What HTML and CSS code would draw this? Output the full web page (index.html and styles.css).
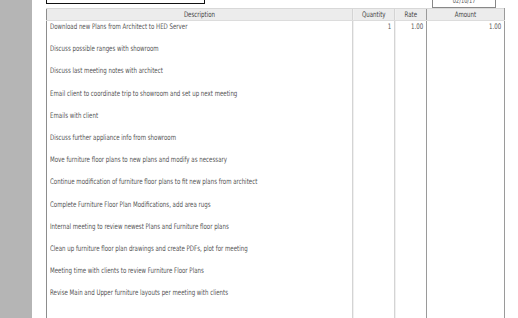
FILE: index.html
```html
<!DOCTYPE html>
<html>
<head>
<meta charset="utf-8">
<link rel="stylesheet" href="styles.css">
</head>
<body>
<div class="sidebar"></div>
<div class="page">
  <div class="topbar">
    <div class="namebox"></div>
    <div class="datebox"><span class="t">02/10/17</span></div>
  </div>
  <table class="items">
    <colgroup>
      <col class="c-desc"><col class="c-qty"><col class="c-rate"><col class="c-amt">
    </colgroup>
    <thead>
      <tr><th><span class="t">Description</span></th><th class="light"><span class="t">Quantity</span></th><th class="light"><span class="t">Rate</span></th><th class="dark"><span class="t">Amount</span></th></tr>
    </thead>
    <tbody>
      <tr><td><span class="t">Download new Plans from Architect to HED Server</span></td><td class="num light"><span class="t">1</span></td><td class="num light"><span class="t">1.00</span></td><td class="num dark"><span class="t">1.00</span></td></tr>
      <tr><td><span class="t">Discuss possible ranges with showroom</span></td><td class="light"></td><td class="light"></td><td class="dark"></td></tr>
      <tr><td><span class="t">Discuss last meeting notes with architect</span></td><td class="light"></td><td class="light"></td><td class="dark"></td></tr>
      <tr><td><span class="t">Email client to coordinate trip to showroom and set up next meeting</span></td><td class="light"></td><td class="light"></td><td class="dark"></td></tr>
      <tr><td><span class="t">Emails with client</span></td><td class="light"></td><td class="light"></td><td class="dark"></td></tr>
      <tr><td><span class="t">Discuss further appliance info from showroom</span></td><td class="light"></td><td class="light"></td><td class="dark"></td></tr>
      <tr><td><span class="t">Move furniture floor plans to new plans and modify as necessary</span></td><td class="light"></td><td class="light"></td><td class="dark"></td></tr>
      <tr><td><span class="t">Continue modification of furniture floor plans to fit new plans from architect</span></td><td class="light"></td><td class="light"></td><td class="dark"></td></tr>
      <tr><td><span class="t">Complete Furniture Floor Plan Modifications, add area rugs</span></td><td class="light"></td><td class="light"></td><td class="dark"></td></tr>
      <tr><td><span class="t">Internal meeting to review newest Plans and Furniture floor plans</span></td><td class="light"></td><td class="light"></td><td class="dark"></td></tr>
      <tr><td><span class="t">Clean up furniture floor plan drawings and create PDFs, plot for meeting</span></td><td class="light"></td><td class="light"></td><td class="dark"></td></tr>
      <tr><td><span class="t">Meeting time with clients to review Furniture Floor Plans</span></td><td class="light"></td><td class="light"></td><td class="dark"></td></tr>
      <tr><td><span class="t">Revise Main and Upper furniture layouts per meeting with clients</span></td><td class="light"></td><td class="light"></td><td class="dark"></td></tr>
      <tr class="tail"><td></td><td class="light"></td><td class="light"></td><td class="dark"></td></tr>
    </tbody>
  </table>
</div>
</body>
</html>
```
FILE: styles.css
```css
html, body {
  margin: 0;
  padding: 0;
  height: 318px;
  overflow: hidden;
  background: #ffffff;
}
body {
  display: flex;
  font-family: "DejaVu Sans Condensed", "Liberation Sans Narrow", "Liberation Sans", sans-serif;
  font-stretch: condensed;
  color: #555555;
}
.sidebar {
  width: 32px;
  flex: none;
  background: #b5b5b5;
}
.page {
  flex: 1;
  padding-left: 14px;
  background: #ffffff;
}
.t {
  display: inline-block;
  transform: scaleX(0.8);
  transform-origin: left center;
  white-space: nowrap;
}
.topbar {
  display: flex;
  justify-content: space-between;
  align-items: flex-start;
  height: 8px;
  width: 450px;
}
.namebox {
  width: 157px;
  height: 12px;
  margin-top: -10px;
  border: 1px solid #111;
  border-bottom-width: 1.5px;
}
.datebox {
  width: 62px;
  height: 10px;
  margin-top: -4px;
  border: 1px solid #888;
  font-size: 7px;
  line-height: 8px;
  text-align: center;
  color: #555;
  overflow: hidden;
}
.datebox .t, .items th .t {
  transform-origin: center center;
}
.items {
  border-collapse: collapse;
  table-layout: fixed;
  width: 458px;
  font-size: 7.6px;
}
.c-desc { width: 306px; }
.c-qty { width: 42px; }
.c-rate { width: 32px; }
.c-amt { width: 78px; }
.items th {
  background: #ececec;
  font-weight: normal;
  height: 11px;
  padding: 0;
  line-height: 11px;
  text-align: center;
  border-top: 1px solid #d8d8d8;
  border-bottom: 1px solid #dcdcdc;
  color: #444;
  white-space: nowrap;
  overflow: hidden;
}
.items th:first-child, .items td:first-child {
  border-left: 1px solid #8d8d8d;
}
.items td {
  height: 21.2px;
  padding: 1px 3px 0 3px;
  vertical-align: top;
  line-height: 9px;
  white-space: nowrap;
  overflow: hidden;
}
.items .light {
  border-left: 1px solid #d4d4d4;
  box-shadow: inset 1px 0 0 #f0f0f0;
}
.items .dark {
  border-left: 1px solid #9a9a9a;
  border-right: 1px solid #9a9a9a;
}
.items .num {
  text-align: right;
}
.items .num .t {
  transform-origin: right center;
}
.items tr.tail td {
  height: 30px;
}
```
